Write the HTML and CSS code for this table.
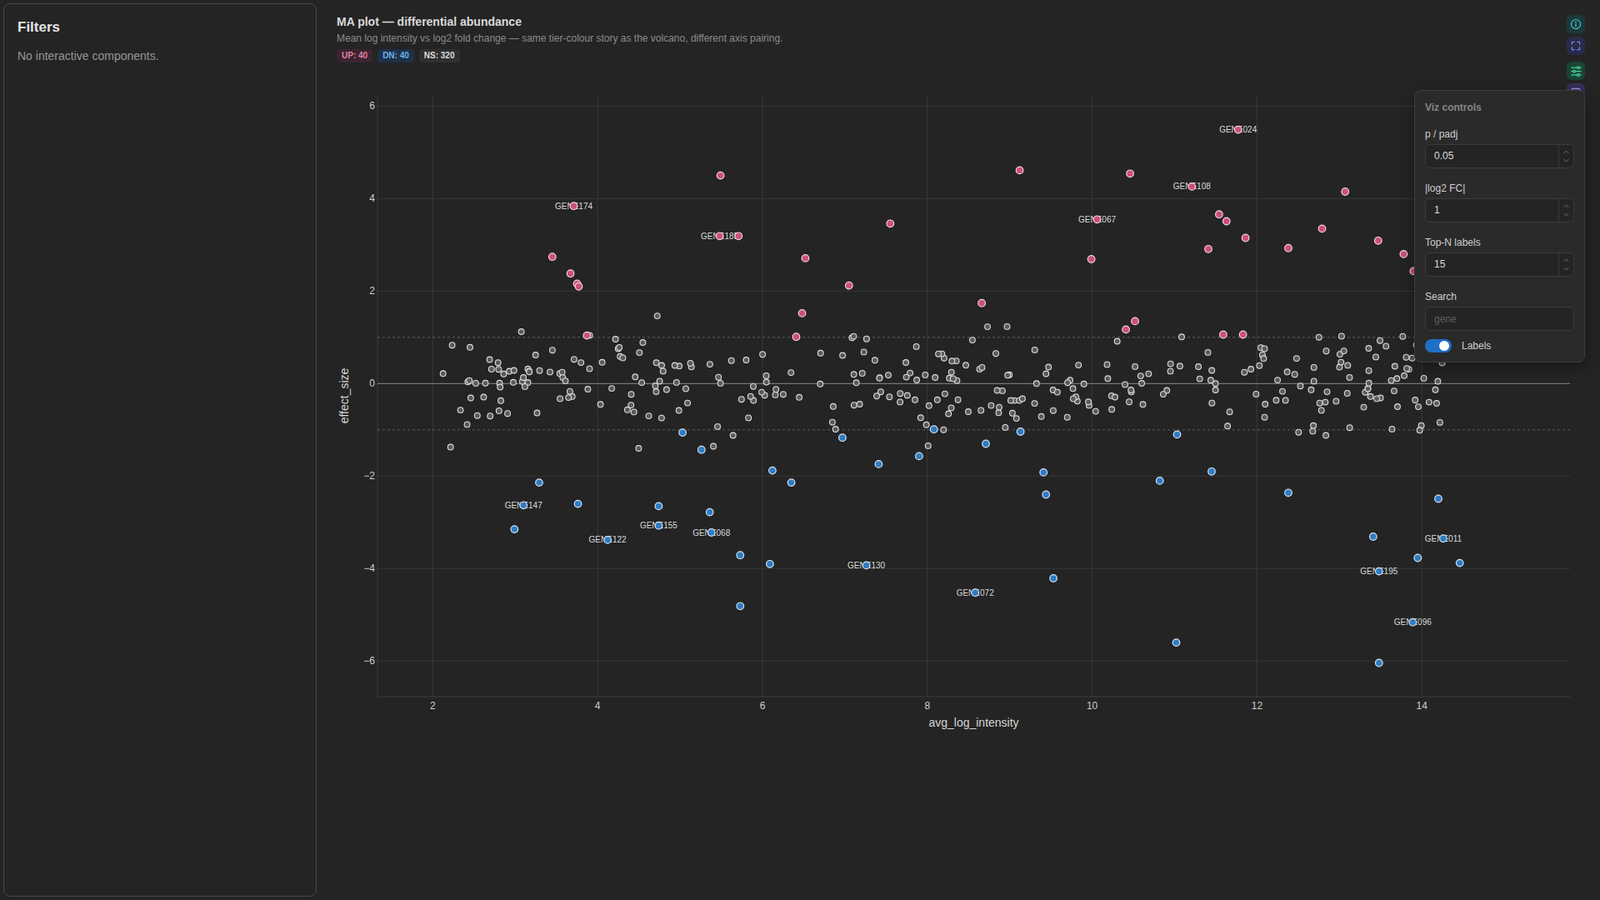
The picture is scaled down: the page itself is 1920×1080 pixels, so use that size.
FILE: index.html
```html
<!DOCTYPE html>
<html lang="en">
<head>
<meta charset="utf-8">
<title>MA plot — differential abundance</title>
<link rel="stylesheet" href="styles.css">
</head>
<body>
<div class="app">
  <aside class="filters">
    <h2>Filters</h2>
    <p>No interactive components.</p>
  </aside>
  <main class="main">
    <header class="head">
      <h1>MA plot — differential abundance</h1>
      <p class="sub">Mean log intensity vs log2 fold change — same tier-colour story as the volcano, different axis pairing.</p>
      <div class="badges">
        <span class="badge up">UP: 40</span>
        <span class="badge dn">DN: 40</span>
        <span class="badge ns">NS: 320</span>
      </div>
    </header>
    <div class="plot">
      <svg id="plot" width="1524" height="800" viewBox="0 0 1524 800"></svg>
    </div>
  </main>

  <div class="toolbar">
    <div class="tool info">
      <svg viewBox="0 0 24 24" width="14" height="14"><circle cx="12" cy="12" r="9.5"/><line x1="12" y1="11" x2="12" y2="17"/><circle cx="12" cy="7.5" r="0.6" class="dot"/></svg>
    </div>
    <div class="tool expand">
      <svg viewBox="0 0 24 24" width="14" height="14"><path d="M4 9V4h5M15 4h5v5M20 15v5h-5M9 20H4v-5"/></svg>
    </div>
    <div class="tool sliders gap">
      <svg viewBox="0 0 24 24" width="15" height="15"><path d="M3 5h18M3 12h18M3 19h18"/><circle cx="16" cy="5" r="2.2"/><circle cx="8" cy="12" r="2.2"/><circle cx="16" cy="19" r="2.2"/></svg>
    </div>
    <div class="tool table">
      <svg viewBox="0 0 24 24" width="14" height="14"><rect x="4" y="4" width="16" height="16" rx="2"/><path d="M4 10h16M12 10v10"/></svg>
    </div>
  </div>

  <section class="viz">
    <div class="viz-title">Viz controls</div>
    <div class="field first">
      <div class="lbl">p / padj</div>
      <div class="num"><span class="val">0.05</span><span class="spin"><svg viewBox="0 0 10 6" width="7" height="5"><path d="M1 5l4-4 4 4"/></svg><svg viewBox="0 0 10 6" width="7" height="5"><path d="M1 1l4 4 4-4"/></svg></span></div>
    </div>
    <div class="field">
      <div class="lbl">|log2 FC|</div>
      <div class="num"><span class="val">1</span><span class="spin"><svg viewBox="0 0 10 6" width="7" height="5"><path d="M1 5l4-4 4 4"/></svg><svg viewBox="0 0 10 6" width="7" height="5"><path d="M1 1l4 4 4-4"/></svg></span></div>
    </div>
    <div class="field">
      <div class="lbl">Top-N labels</div>
      <div class="num"><span class="val">15</span><span class="spin"><svg viewBox="0 0 10 6" width="7" height="5"><path d="M1 5l4-4 4 4"/></svg><svg viewBox="0 0 10 6" width="7" height="5"><path d="M1 1l4 4 4-4"/></svg></span></div>
    </div>
    <div class="field">
      <div class="lbl">Search</div>
      <input class="search" type="text" placeholder="gene">
    </div>
    <div class="switch-row">
      <span class="toggle"></span>
      <span class="switch-lbl">Labels</span>
    </div>
  </section>
</div>
<script src="script.js"></script>
</body>
</html>
```

FILE: styles.css
```css
html, body {
  margin: 0;
  background: #242424;
  font-family: "Liberation Sans", Arial, sans-serif;
  color: #dddddd;
}

.app {
  position: relative;
  display: flex;
  gap: 12px;
  padding: 4px;
  height: 1080px;
  box-sizing: border-box;
  overflow: hidden;
}

.filters {
  flex: 0 0 376px;
  box-sizing: border-box;
  border: 1px solid #474747;
  border-radius: 8px;
  padding: 18px 16px;
  background: #242424;
}

.filters h2 {
  margin: 0;
  font-size: 17px;
  line-height: 20px;
  font-weight: 700;
  color: #e4e4e4;
}

.filters p {
  margin: 15px 0 0;
  font-size: 14px;
  line-height: 18px;
  color: #979797;
}

.main {
  flex: 1;
  min-width: 0;
}

.head {
  padding: 13px 0 0 12px;
}

.head h1 {
  margin: 0;
  font-size: 14px;
  line-height: 18px;
  font-weight: 700;
  color: #d9d9d9;
}

.sub {
  margin: 3px 0 0;
  font-size: 12px;
  line-height: 16px;
  color: #8b8b8b;
}

.badges {
  display: flex;
  gap: 6px;
  margin-top: 5px;
}

.badge {
  height: 16px;
  line-height: 16px;
  padding: 0 6px;
  border-radius: 4px;
  font-size: 10px;
  font-weight: 700;
}

.badge.up { background: #3b2430; color: #e47fa5; }
.badge.dn { background: #1d3148; color: #6cb0ec; }
.badge.ns { background: #2f2f2f; color: #dedede; }

.plot {
  margin-top: 5px;
}

.plot svg {
  display: block;
}

/* floating toolbar */
.toolbar {
  position: absolute;
  left: 1880px;
  top: 18px;
  display: flex;
  flex-direction: column;
  gap: 4px;
}

.tool {
  width: 22px;
  height: 22px;
  border-radius: 6px;
  display: flex;
  align-items: center;
  justify-content: center;
}

.tool.gap { margin-top: 4px; }

.tool svg {
  fill: none;
  stroke-width: 2;
  stroke-linecap: round;
  stroke-linejoin: round;
}

.tool.info { background: #1b3a3c; }
.tool.info svg { stroke: #4cc9cc; }
.tool.info svg .dot { fill: #4cc9cc; }
.tool.expand { background: #282b4a; }
.tool.expand svg { stroke: #7f86e6; }
.tool.sliders { background: #1b4435; }
.tool.sliders svg { stroke: #45d59c; }
.tool.sliders svg circle { fill: #1b4435; }
.tool.table { background: #372f5c; }
.tool.table svg { stroke: #a893f0; }

/* viz controls popover */
.viz {
  position: absolute;
  left: 1697px;
  top: 108px;
  width: 205px;
  box-sizing: border-box;
  padding: 12px 12px 11px;
  background: #2a2a2a;
  border: 1px solid #3c3c3c;
  border-radius: 8px;
  box-shadow: 0 6px 18px rgba(0, 0, 0, 0.35);
  z-index: 2;
}

.viz-title {
  font-size: 12px;
  line-height: 16px;
  font-weight: 700;
  color: #858585;
}

.field { margin-top: 16px; }
.field.first { margin-top: 16px; }

.lbl {
  font-size: 12px;
  line-height: 16px;
  color: #cfcfcf;
  margin-bottom: 4px;
}

.num {
  display: flex;
  height: 29px;
  box-sizing: border-box;
  border: 1px solid #3b3b3b;
  border-radius: 6px;
  background: #242424;
}

.num .val {
  flex: 1;
  padding-left: 10px;
  font-size: 12px;
  line-height: 27px;
  color: #dcdcdc;
}

.spin {
  width: 17px;
  border-left: 1px solid #3b3b3b;
  display: flex;
  flex-direction: column;
  align-items: center;
  justify-content: space-evenly;
}

.spin svg {
  fill: none;
  stroke: #7a7a7a;
  stroke-width: 1.3;
}

.search {
  display: block;
  width: 100%;
  height: 29px;
  box-sizing: border-box;
  border: 1px solid #3b3b3b;
  border-radius: 6px;
  background: #242424;
  padding: 0 10px;
  font-family: "Liberation Sans", Arial, sans-serif;
  font-size: 12px;
  color: #dcdcdc;
  outline: none;
}

.search::placeholder { color: #5e5e5e; }

.switch-row {
  display: flex;
  align-items: center;
  gap: 12px;
  margin-top: 10px;
  height: 16px;
}

.toggle {
  position: relative;
  width: 32px;
  height: 16px;
  border-radius: 8px;
  background: #1e6fc7;
}

.toggle::after {
  content: "";
  position: absolute;
  right: 3px;
  top: 2px;
  width: 12px;
  height: 12px;
  border-radius: 50%;
  background: #ffffff;
}

.switch-lbl {
  font-size: 12px;
  color: #cfcfcf;
}
```

FILE: script.js
```js
(function () {
  var svg = document.getElementById('plot');
  var NSURI = 'http://www.w3.org/2000/svg';

  function el(tag, attrs, text) {
    var e = document.createElementNS(NSURI, tag);
    for (var k in attrs) e.setAttribute(k, attrs[k]);
    if (text !== undefined) e.textContent = text;
    svg.appendChild(e);
    return e;
  }

  var X0 = 127.4, XS = 98.9, Y0 = 380.3, YS = 55.5;
  var L = 61, R = 1492, T = 36, B = 756;
  function px(v) { return X0 + (v - 2) * XS; }
  function py(v) { return Y0 - v * YS; }

  var GRID = '#383838';
  var v;
  for (v = 2; v <= 14; v += 2) {
    el('line', { x1: px(v), x2: px(v), y1: T, y2: B, stroke: GRID, 'stroke-width': 1 });
  }
  for (v = -6; v <= 6; v += 2) {
    if (v === 0) continue;
    el('line', { x1: L, x2: R, y1: py(v), y2: py(v), stroke: GRID, 'stroke-width': 1 });
  }
  el('line', { x1: L, x2: L, y1: T, y2: B, stroke: '#3c3c3c', 'stroke-width': 1 });
  el('line', { x1: L, x2: R, y1: B, y2: B, stroke: '#3c3c3c', 'stroke-width': 1 });
  el('line', { x1: L, x2: R, y1: py(1), y2: py(1), stroke: '#5e5e5e', 'stroke-width': 1, 'stroke-dasharray': '3 3' });
  el('line', { x1: L, x2: R, y1: py(-1), y2: py(-1), stroke: '#5e5e5e', 'stroke-width': 1, 'stroke-dasharray': '3 3' });
  el('line', { x1: L, x2: R, y1: py(0), y2: py(0), stroke: '#8a8a8a', 'stroke-width': 1 });

  var TICK = { fill: '#cfcfcf', 'font-size': 12, 'font-family': 'Liberation Sans, Arial, sans-serif' };
  function tickAttrs(extra) {
    var a = {};
    for (var k in TICK) a[k] = TICK[k];
    for (k in extra) a[k] = extra[k];
    return a;
  }
  for (v = -6; v <= 6; v += 2) {
    var lab = v < 0 ? '\u2212' + Math.abs(v) : String(v);
    el('text', tickAttrs({ x: L - 3, y: py(v) + 4, 'text-anchor': 'end' }), lab);
  }
  for (v = 2; v <= 14; v += 2) {
    el('text', tickAttrs({ x: px(v), y: 771, 'text-anchor': 'middle' }), String(v));
  }
  el('text', tickAttrs({ x: (L + R) / 2, y: 792, 'text-anchor': 'middle', 'font-size': 14, fill: '#d6d6d6' }), 'avg_log_intensity');
  el('text', tickAttrs({ x: 0, y: 0, 'text-anchor': 'middle', 'font-size': 14, fill: '#d6d6d6', transform: 'translate(26 395) rotate(-90)' }), 'effect_size');

  var seed = 20240611;
  function rnd() {
    seed |= 0; seed = (seed + 0x6D2B79F5) | 0;
    var t = Math.imul(seed ^ (seed >>> 15), 1 | seed);
    t = (t + Math.imul(t ^ (t >>> 7), 61 | t)) ^ t;
    return ((t ^ (t >>> 14)) >>> 0) / 4294967296;
  }
  function gauss() {
    var u = rnd() || 1e-6, w = rnd();
    return Math.sqrt(-2 * Math.log(u)) * Math.cos(2 * Math.PI * w);
  }
  for (var i = 0; i < 320; i++) {
    var x = 2.1 + rnd() * 12.2;
    var y;
    do { y = gauss() * 0.5; } while (Math.abs(y) > 1.65);
    el('circle', { cx: px(x).toFixed(1), cy: py(y).toFixed(1), r: 3.4, fill: '#5a5a5a', stroke: '#dedede', 'stroke-width': 1.1 });
  }

  var up = [
    [5.49, 4.50], [3.71, 3.84, 'GENE174'], [5.48, 3.19, 'GENE185'], [5.71, 3.19],
    [3.45, 2.74], [3.67, 2.38], [3.75, 2.16], [3.77, 2.10], [3.87, 1.04],
    [6.52, 2.71], [6.48, 1.52], [6.41, 1.01], [7.05, 2.12], [7.55, 3.46],
    [9.12, 4.61], [10.46, 4.54], [9.99, 2.69], [10.06, 3.55, 'GENE067'],
    [8.66, 1.74], [10.41, 1.17], [10.52, 1.35], [11.77, 5.49, 'GENE024'],
    [11.21, 4.26, 'GENE108'], [11.54, 3.66], [11.63, 3.51], [11.41, 2.91],
    [11.86, 3.15], [11.59, 1.06], [11.83, 1.06], [12.38, 2.93], [12.79, 3.35],
    [13.07, 4.15], [13.47, 3.09], [13.78, 2.80], [13.90, 2.43],
    [14.2, 4.9, 'GENE033'], [14.3, 1.9], [14.1, 3.3], [14.4, 1.3], [14.25, 2.6]
  ];
  var dn = [
    [3.29, -2.14], [3.76, -2.60], [3.10, -2.63, 'GENE147'], [2.99, -3.15],
    [4.12, -3.38, 'GENE122'], [4.74, -2.65], [4.74, -3.07, 'GENE155'],
    [5.03, -1.06], [5.26, -1.43], [5.36, -2.78], [5.38, -3.22, 'GENE068'],
    [5.73, -3.71], [5.73, -4.81], [6.09, -3.90], [6.12, -1.88], [6.35, -2.14],
    [6.97, -1.17], [7.26, -3.93, 'GENE130'], [7.41, -1.74], [7.90, -1.57],
    [8.08, -0.99], [8.58, -4.52, 'GENE072'], [8.71, -1.30], [9.13, -1.04],
    [9.41, -1.92], [9.44, -2.40], [9.53, -4.21], [10.82, -2.10], [11.03, -1.10],
    [11.02, -5.60], [11.45, -1.90], [12.38, -2.36], [13.41, -3.31],
    [13.48, -4.06, 'GENE195'], [13.48, -6.04], [13.89, -5.16, 'GENE096'],
    [13.95, -3.77], [14.20, -2.49], [14.26, -3.35, 'GENE011'], [14.46, -3.88]
  ];

  function labels(list) {
    list.forEach(function (p) {
      if (p[2]) {
        el('text', { x: px(p[0]).toFixed(1), y: (py(p[1]) + 3.5).toFixed(1), 'text-anchor': 'middle', fill: '#dadada', 'font-size': 10, 'font-family': 'Liberation Sans, Arial, sans-serif' }, p[2]);
      }
    });
  }
  labels(up); labels(dn);

  function dots(list, fill, stroke) {
    list.forEach(function (p) {
      el('circle', { cx: px(p[0]).toFixed(1), cy: py(p[1]).toFixed(1), r: 4.3, fill: fill, stroke: stroke, 'stroke-width': 1.2 });
    });
  }
  dots(up, '#cc4f80', '#f3d3df');
  dots(dn, '#2f7cc2', '#d3e5f6');
})();
```
